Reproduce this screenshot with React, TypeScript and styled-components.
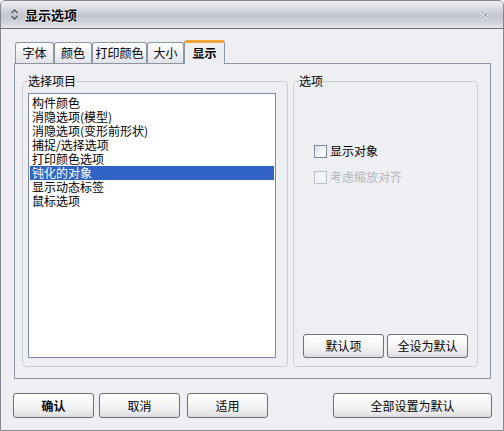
import React from 'react';
import styled, {createGlobalStyle, css} from 'styled-components';

const GlobalStyle = createGlobalStyle`
  html, body {
    margin: 0;
    padding: 0;
    background: #ffffff;
  }
  body {
    font-family: "Noto Sans CJK SC", "Liberation Sans", sans-serif;
    font-size: 12px;
    color: #000;
  }
`;

const tabs = [
  {label: '字体', width: 39},
  {label: '颜色', width: 38},
  {label: '打印颜色', width: 55},
  {label: '大小', width: 37},
  {label: '显示', width: 41, active: true},
];

const items = [
  '构件颜色',
  '消隐选项(模型)',
  '消隐选项(变形前形状)',
  '捕捉/选择选项',
  '打印颜色选项',
  '钝化的对象',
  '显示动态标签',
  '鼠标选项',
];

export default function App() {
  const [selected, setSelected] = React.useState(5);
  const [showObj, setShowObj] = React.useState(false);

  return (
    <>
      <GlobalStyle />
      <Window>
        <TitleBar>
          <TitleIcon width="9" height="11" viewBox="0 0 9 11">
            <path d="M1.5 4 L4.5 1 L7.5 4" fill="none" stroke="#555" strokeWidth="1.4" />
            <path d="M1.5 7 L4.5 10 L7.5 7" fill="none" stroke="#555" strokeWidth="1.4" />
          </TitleIcon>
          <Title>显示选项</Title>
          <CloseIcon width="11" height="10" viewBox="0 0 11 10">
            <path d="M1.5 1.5 L9.5 8.5 M9.5 1.5 L1.5 8.5" stroke="#fff" strokeWidth="2.6" />
            <path d="M1.5 1.5 L9.5 8.5 M9.5 1.5 L1.5 8.5" stroke="#a3a5ad" strokeWidth="1.4" />
          </CloseIcon>
        </TitleBar>

        <Body>
          <TabRow>
            {tabs.map(t => (
              <Tab key={t.label} $width={t.width} $active={!!t.active}>
                {t.label}
              </Tab>
            ))}
          </TabRow>

          <Panel>
            <Group $width={266}>
              <Legend>选择项目</Legend>
              <ListBox>
                {items.map((it, i) => (
                  <ListItem
                    key={it}
                    $selected={i === selected}
                    onClick={() => setSelected(i)}>
                    {it}
                  </ListItem>
                ))}
              </ListBox>
            </Group>

            <Group $width={185}>
              <Legend>选项</Legend>
              <Options>
                <CheckRow onClick={() => setShowObj(v => !v)}>
                  <CheckBox $checked={showObj} />
                  <span>显示对象</span>
                </CheckRow>
                <CheckRow $disabled>
                  <CheckBox $disabled />
                  <span>考虑缩放对齐</span>
                </CheckRow>
              </Options>
              <GroupButtons>
                <Button $height={24}>默认项</Button>
                <Button $height={24}>全设为默认</Button>
              </GroupButtons>
            </Group>
          </Panel>

          <Footer>
            <FooterLeft>
              <Button $bold>确认</Button>
              <Button>取消</Button>
              <Button>适用</Button>
            </FooterLeft>
            <Button $width={159}>全部设置为默认</Button>
          </Footer>
        </Body>
      </Window>
    </>
  );
}

const Window = styled.div`
  width: 504px;
  height: 431px;
  box-sizing: border-box;
  border: 1px solid #85868c;
  border-radius: 5px 5px 0 0;
  background: #eeeff3;
  display: flex;
  flex-direction: column;
  overflow: hidden;
`;

const TitleBar = styled.div`
  height: 27px;
  flex: none;
  border-bottom: 1px solid #6f7078;
  background: linear-gradient(
    to bottom,
    #eeeff3 0%,
    #d6d8df 30%,
    #c3c5ce 55%,
    #d2d4dc 80%,
    #e6e7ec 100%
  );
  display: flex;
  align-items: center;
  padding: 0 12px 0 9px;
`;

const TitleIcon = styled.svg`
  flex: none;
  margin-right: 6px;
`;

const Title = styled.div`
  font-size: 13px;
  font-weight: bold;
  line-height: 16px;
  text-shadow: 0 0 2px #fff, 0 0 2px #fff;
  flex: 1;
`;

const CloseIcon = styled.svg`
  flex: none;
`;

const Body = styled.div`
  flex: 1;
  display: flex;
  flex-direction: column;
  padding: 11px 12px 0 13px;
`;

const TabRow = styled.div`
  height: 23px;
  display: flex;
  align-items: flex-end;
  padding-left: 1px;
  position: relative;
  z-index: 1;
`;

const Tab = styled.div<{$width: number; $active: boolean}>`
  width: ${p => p.$width}px;
  box-sizing: border-box;
  height: 21px;
  border: 1px solid #8e96a4;
  border-bottom: none;
  border-radius: 3px 3px 0 0;
  background: linear-gradient(to bottom, #ffffff 0%, #f1f1f4 50%, #e2e3e9 100%);
  text-align: center;
  line-height: 19px;
  font-size: 12px;
  ${p =>
    p.$active &&
    css`
      height: 24px;
      margin-bottom: -1px;
      border-top: 3px solid #f2a33b;
      background: #eeeff3;
      line-height: 19px;
      font-weight: bold;
    `}
`;

const Panel = styled.div`
  width: 477px;
  height: 316px;
  box-sizing: border-box;
  border: 1px solid #8e96a4;
  background: #eeeff3;
  display: flex;
  gap: 5px;
  padding: 10px 0 11px 7px;
`;

const Group = styled.fieldset<{$width: number}>`
  width: ${p => p.$width}px;
  box-sizing: border-box;
  margin: 0;
  padding: 5px 0 8px 5px;
  min-width: 0;
  border: 1px solid #cbcdd6;
  border-radius: 4px;
  display: flex;
  flex-direction: column;
`;

const Legend = styled.legend`
  padding: 0;
  font-size: 12px;
  line-height: 14px;
  background: #eeeff3;
`;

const ListBox = styled.div`
  width: 248px;
  height: 265px;
  box-sizing: border-box;
  border: 1px solid #7f88b5;
  background: #ffffff;
  padding: 2px 1px;
`;

const ListItem = styled.div<{$selected?: boolean}>`
  height: 14px;
  line-height: 14px;
  padding-left: 2px;
  white-space: nowrap;
  cursor: default;
  ${p =>
    p.$selected &&
    css`
      background: #3163c4;
      color: #ffffff;
    `}
`;

const Options = styled.div`
  display: flex;
  flex-direction: column;
  gap: 12px;
  padding: 51px 0 0 15px;
`;

const CheckRow = styled.label<{$disabled?: boolean}>`
  display: flex;
  align-items: center;
  gap: 3px;
  height: 14px;
  line-height: 14px;
  color: ${p => (p.$disabled ? '#b4b6bc' : '#000')};
  cursor: default;
`;

const CheckBox = styled.span<{$checked?: boolean; $disabled?: boolean}>`
  width: 13px;
  height: 13px;
  box-sizing: border-box;
  border: 1px solid ${p => (p.$disabled ? '#bcc0c9' : '#7d879e')};
  background: ${p =>
    p.$disabled
      ? '#f2f3f6'
      : 'linear-gradient(135deg, #dfe1e8 0%, #f6f7f9 60%, #ffffff 100%)'};
  position: relative;
  ${p =>
    p.$checked &&
    css`
      &::after {
        content: '';
        position: absolute;
        left: 3px;
        top: 0px;
        width: 4px;
        height: 7px;
        border: solid #21a121;
        border-width: 0 2px 2px 0;
        transform: rotate(45deg);
      }
    `}
`;

const GroupButtons = styled.div`
  margin-top: auto;
  display: flex;
  gap: 3px;
  padding-left: 4px;
`;

const Button = styled.button<{$width?: number; $height?: number; $bold?: boolean}>`
  width: ${p => p.$width ?? 81}px;
  height: ${p => p.$height ?? 25}px;
  box-sizing: border-box;
  border: 1px solid #6d6f75;
  border-radius: 3px;
  background: linear-gradient(to bottom, #ffffff 0%, #f6f6f7 45%, #e8e8eb 85%, #d8d9dd 100%);
  font-family: "Noto Sans CJK SC", "Liberation Sans", sans-serif;
  font-size: 12px;
  font-weight: ${p => (p.$bold ? 'bold' : 'normal')};
  color: #000;
  padding: 0;
  line-height: 14px;
  cursor: default;
`;

const Footer = styled.div`
  margin: 14px -1px 0 -1px;
  display: flex;
  justify-content: space-between;
`;

const FooterLeft = styled.div`
  display: flex;
  gap: 5px;

  & > :nth-child(3) {
    margin-left: 2px;
  }
`;
